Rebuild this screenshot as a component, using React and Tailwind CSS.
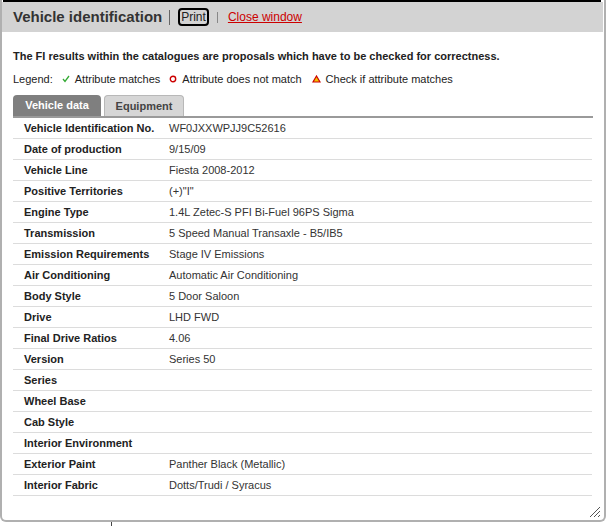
import React from "react";

const rows = [
  ["Vehicle Identification No.", "WF0JXXWPJJ9C52616"],
  ["Date of production", "9/15/09"],
  ["Vehicle Line", "Fiesta 2008-2012"],
  ["Positive Territories", "(+)\"I\""],
  ["Engine Type", "1.4L Zetec-S PFI Bi-Fuel 96PS Sigma"],
  ["Transmission", "5 Speed Manual Transaxle - B5/IB5"],
  ["Emission Requirements", "Stage IV Emissions"],
  ["Air Conditioning", "Automatic Air Conditioning"],
  ["Body Style", "5 Door Saloon"],
  ["Drive", "LHD FWD"],
  ["Final Drive Ratios", "4.06"],
  ["Version", "Series 50"],
  ["Series", ""],
  ["Wheel Base", ""],
  ["Cab Style", ""],
  ["Interior Environment", ""],
  ["Exterior Paint", "Panther Black (Metallic)"],
  ["Interior Fabric", "Dotts/Trudi / Syracus"],
];

export default function App() {
  return (
    <div
      className="relative w-[606px] h-[526px] bg-white text-[#222] overflow-hidden"
      style={{ fontFamily: '"Liberation Sans", Arial, sans-serif' }}
    >
      <div className="absolute top-0 left-[3px] w-[598px] h-[2px] bg-black" />
      <div className="w-[606px] h-[522px] border-l-2 border-r-2 border-b-2 border-[#b0b0b0] rounded-b-[6px] pt-[2px] flex flex-col">
        <div className="h-[30px] bg-[#d3d3d3] mr-[1px] flex items-center pl-[11px]">
          <span className="text-[15px] font-bold text-[#333]">Vehicle identification</span>
          <span className="ml-[7px] w-px h-[15px] bg-[#666]" />
          <span className="ml-[8px] text-[12px] text-[#222] border-2 border-black rounded-[4px] px-[1px] leading-[14px]">Print</span>
          <span className="ml-[8px] w-px h-[11px] bg-[#888]" />
          <span className="ml-[10px] text-[12px] text-[#c00] underline">Close window</span>
        </div>
        <div className="pl-[11px] pr-[11px]">
          <div className="mt-[17px] text-[11px] font-bold leading-[14px] text-[#222]">
            The FI results within the catalogues are proposals which have to be checked for correctness.
          </div>
          <div className="mt-[9px] flex items-center text-[11px] leading-[14px] text-[#222]">
            <span>Legend:</span>
            <svg className="ml-[9px]" width="8" height="8" viewBox="0 0 8 8">
              <path d="M1 4 L3 6.5 L7 1" fill="none" stroke="#3a3" strokeWidth="1.3" />
            </svg>
            <span className="ml-[5px]">Attribute matches</span>
            <svg className="ml-[9px]" width="8" height="8" viewBox="0 0 8 8">
              <circle cx="4" cy="4" r="2.7" fill="none" stroke="#c00" strokeWidth="1.4" />
            </svg>
            <span className="ml-[5px]">Attribute does not match</span>
            <svg className="ml-[10px]" width="9" height="8" viewBox="0 0 9 8">
              <path d="M4.5 1 L8 7 L1 7 Z" fill="#f2c200" stroke="#c00" strokeWidth="1.2" />
            </svg>
            <span className="ml-[5px]">Check if attribute matches</span>
          </div>
          <div className="mt-[9px] flex items-end border-b-2 border-[#9a9a9a] h-[23px]">
            <div className="h-[21px] w-[88px] bg-[#7f7f7f] rounded-t-[4px] flex items-center justify-center text-white font-bold text-[11px]">
              Vehicle data
            </div>
            <div className="ml-[3px] h-[21px] w-[80px] bg-[#d6d6d6] border border-b-0 border-[#b8b8b8] rounded-t-[4px] flex items-center justify-center text-[#444] font-bold text-[11px]">
              Equipment
            </div>
          </div>
          <div className="mr-[1px]">
            {rows.map(([k, v]) => (
              <div key={k} className="flex items-center h-[21px] border-b border-[#dcdcdc] text-[11px]">
                <span className="pl-[11px] w-[156px] font-bold text-[#222]">{k}</span>
                <span className="text-[#333]">{v}</span>
              </div>
            ))}
          </div>
        </div>
        <div className="flex-1" />
      </div>
      <svg className="absolute left-[589px] top-[506px]" width="12" height="12" viewBox="0 0 12 12">
        <path d="M1 11 L11 1 M5 11 L11 5 M9 11 L11 9" stroke="#555" strokeWidth="1" />
      </svg>
      <div className="absolute left-[111px] top-[522px] w-px h-[4px] bg-[#444]" />
    </div>
  );
}
